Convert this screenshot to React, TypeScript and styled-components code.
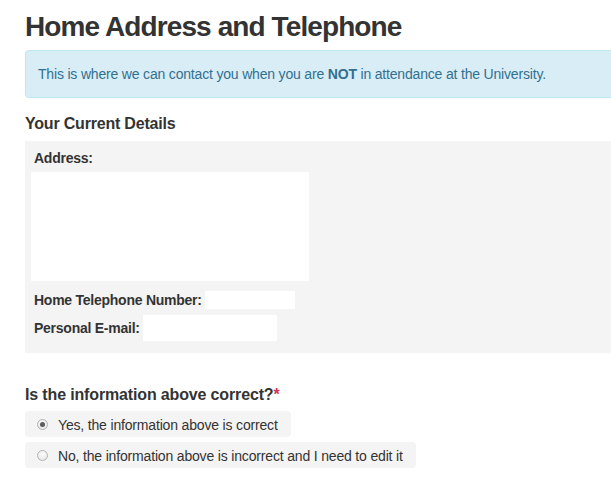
import React from "react";
import styled, { createGlobalStyle } from "styled-components";

const Global = createGlobalStyle`
  html, body { margin: 0; padding: 0; background: #fff; }
  body { font-family: "Liberation Sans", Arial, sans-serif; color: #333; }
`;

const Page = styled.div`
  width: 611px;
  height: 480px;
  overflow: hidden;
`;

const Column = styled.main`
  width: 620px;
  padding-left: 25px;
  padding-top: 12px;
  box-sizing: border-box;
`;

const Title = styled.h1`
  margin: 0;
  font-size: 28px;
  line-height: 30px;
  font-weight: bold;
  letter-spacing: -0.9px;
  color: #333;
`;

const Alert = styled.div`
  margin-top: 8px;
  background: #d9edf7;
  border: 1px solid #bce8f1;
  border-radius: 4px;
  color: #31708f;
  font-size: 14px;
  line-height: 20px;
  letter-spacing: -0.18px;
  padding: 13px 12px;
`;

const SectionTitle = styled.h2`
  margin: 16px 0 0;
  font-size: 16px;
  line-height: 20px;
  font-weight: bold;
  letter-spacing: -0.2px;
  color: #333;
`;

const Panel = styled.section`
  margin-top: 7px;
  background: #f4f4f4;
  padding: 7px 6px 12px;
  display: flex;
  flex-direction: column;
`;

const Label = styled.span`
  font-size: 14px;
  line-height: 18px;
  font-weight: bold;
  letter-spacing: -0.25px;
  color: #333;
  padding-left: 3px;
`;

const AddressLabel = styled(Label)`
  line-height: 20px;
`;

const AddressBox = styled.div`
  margin-top: 4px;
  width: 278px;
  height: 109px;
  background: #fff;
`;

const Row = styled.div<{ $gap: number }>`
  display: flex;
  align-items: center;
  gap: 3px;
  margin-top: ${(p) => p.$gap}px;
`;

const ValueBox = styled.div<{ $w: number; $h: number }>`
  width: ${(p) => p.$w}px;
  height: ${(p) => p.$h}px;
  background: #fff;
`;

const Question = styled.h2`
  margin: 32px 0 0;
  font-size: 16px;
  line-height: 20px;
  font-weight: bold;
  letter-spacing: -0.15px;
  color: #333;
`;

const Required = styled.span`
  color: #d9334f;
`;

const Options = styled.div`
  margin-top: 6px;
  display: flex;
  flex-direction: column;
  align-items: flex-start;
  gap: 5px;
`;

const Option = styled.label`
  display: flex;
  align-items: center;
  gap: 10px;
  height: 26px;
  padding: 1px 13px 0 12px;
  background: #f4f4f4;
  border-radius: 4px;
  font-size: 14px;
  line-height: 20px;
  letter-spacing: -0.17px;
  color: #333;
  box-sizing: border-box;
`;

const Radio = styled.span<{ $checked?: boolean }>`
  position: relative;
  width: 11px;
  height: 11px;
  border-radius: 50%;
  border: 1px solid #b4b4b4;
  background: radial-gradient(circle at 50% 35%, #fdfdfd, #e2e2e2);
  box-sizing: border-box;
  flex: none;
  &::after {
    content: "";
    display: ${(p) => (p.$checked ? "block" : "none")};
    position: absolute;
    left: 2px;
    top: 2px;
    width: 5px;
    height: 5px;
    border-radius: 50%;
    background: #5c5c5c;
  }
`;

export default function App() {
  return (
    <Page>
      <Global />
      <Column>
        <Title>Home Address and Telephone</Title>
        <Alert>
          This is where we can contact you when you are <b>NOT</b> in attendance at the University.
        </Alert>
        <SectionTitle>Your Current Details</SectionTitle>
        <Panel>
          <AddressLabel>Address:</AddressLabel>
          <AddressBox />
          <Row $gap={10}>
            <Label>Home Telephone Number:</Label>
            <ValueBox $w={90} $h={18} />
          </Row>
          <Row $gap={6}>
            <Label>Personal E-mail:</Label>
            <ValueBox $w={134} $h={26} />
          </Row>
        </Panel>
        <Question>
          Is the information above correct?<Required>*</Required>
        </Question>
        <Options>
          <Option>
            <Radio $checked />
            Yes, the information above is correct
          </Option>
          <Option>
            <Radio />
            No, the information above is incorrect and I need to edit it
          </Option>
        </Options>
      </Column>
    </Page>
  );
}
